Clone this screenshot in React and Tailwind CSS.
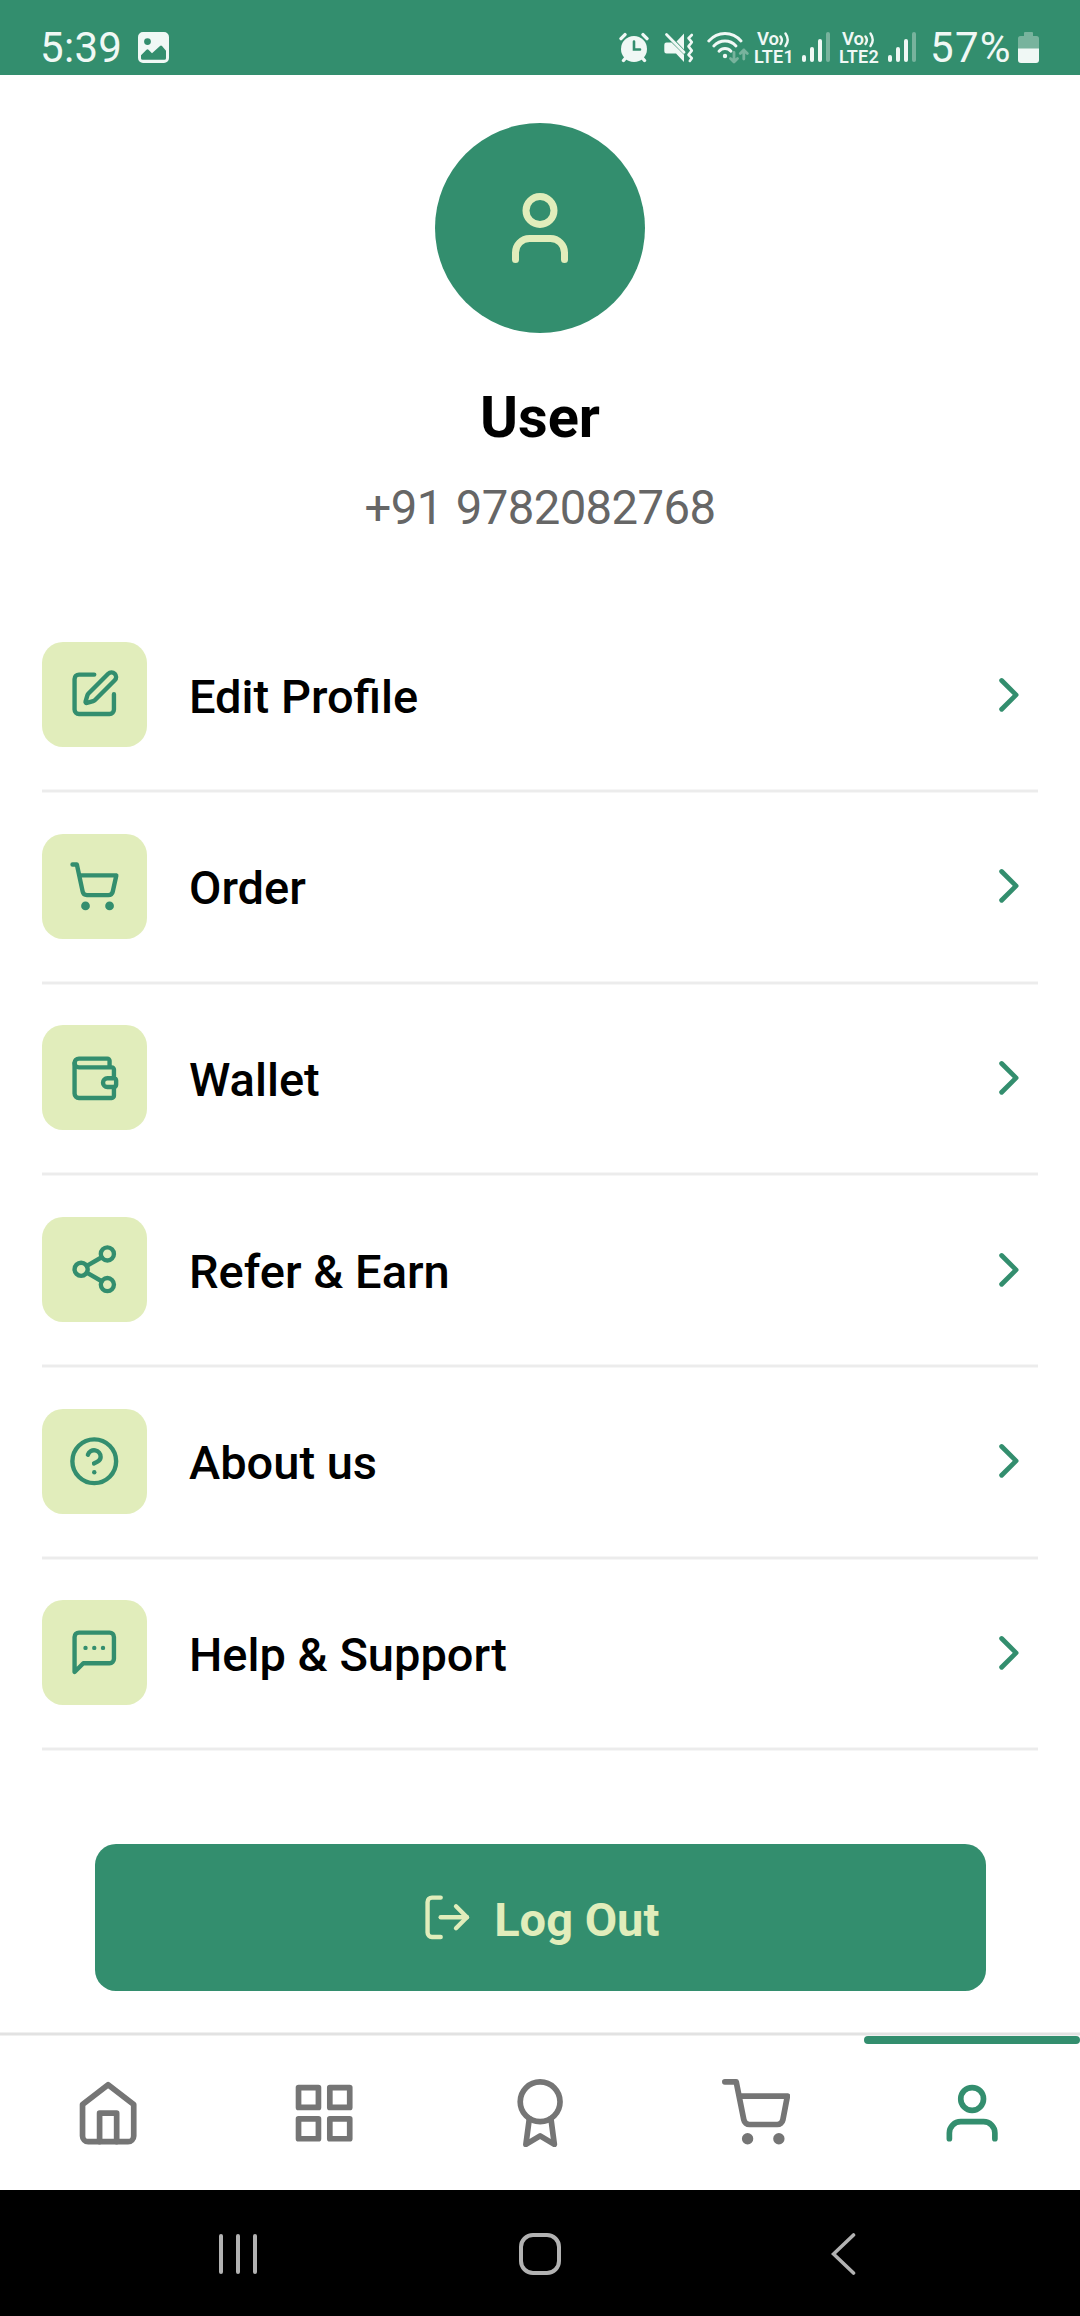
import React from "react";
import {
  User,
  SquarePen,
  ShoppingCart,
  Wallet,
  Share2,
  ChevronRight,
  LogOut,
} from "lucide-react";
import { FiHome, FiGrid, FiAward, FiShoppingCart, FiUser } from "react-icons/fi";

const stroke = {
  fill: "none",
  stroke: "currentColor",
  strokeWidth: 2,
  strokeLinecap: "round",
  strokeLinejoin: "round",
};

function HelpIcon({ size }) {
  return (
    <svg width={size} height={size} viewBox="0 0 24 24" {...stroke}>
      <circle cx="12" cy="12" r="10" />
      <path d="M9.09 9a3 3 0 0 1 5.83 1c0 2-3 3-3 3" />
      <path d="M12 17h.01" />
    </svg>
  );
}

function MessageIcon({ size }) {
  return (
    <svg width={size} height={size} viewBox="0 0 24 24" {...stroke}>
      <path d="M21 15a2 2 0 0 1-2 2H7l-4 4V5a2 2 0 0 1 2-2h14a2 2 0 0 1 2 2z" />
      <path d="M8 10h.01M12 10h.01M16 10h.01" />
    </svg>
  );
}

function PictureIcon() {
  return (
    <svg width="31" height="31" viewBox="0 0 31 31">
      <path
        fill="currentColor"
        fillRule="evenodd"
        d="M5 0h21a5 5 0 0 1 5 5v21a5 5 0 0 1-5 5H5a5 5 0 0 1-5-5V5a5 5 0 0 1 5-5zM9.5 6.2a3.4 3.4 0 1 0 0 6.8a3.4 3.4 0 0 0 0-6.8zM3 23.2v3q0 1.6 1.6 1.6h21.8q1.6 0 1.6-1.6v-7.4L24 13.9q-1-1-2 0L14 21.2l-3.500-3.400q-1-1-2 0z"
      />
    </svg>
  );
}

function AlarmIcon() {
  return (
    <svg width="30" height="31" viewBox="0 0 30 31">
      <g fill="none" stroke="currentColor" strokeLinecap="round">
        <path strokeWidth="3.400" d="M2 6.600l4-4M28 6.600l-4-4M4.500 28.500l2.500-3M25.500 28.500l-2.500-3" />
      </g>
      <circle cx="15" cy="17" r="13" fill="currentColor" />
      <path d="M15 9.500v8h6" fill="none" stroke="#338e6e" strokeWidth="2.600" strokeLinecap="round" />
    </svg>
  );
}

function MuteIcon() {
  return (
    <svg width="30" height="31" viewBox="0 0 30 31">
      <path fill="currentColor" d="M20 1.500v16L12.500 9.500z" />
      <path fill="currentColor" d="M2.500 10.500h5L20 22.800V30l-8-8.500H2.500Q.3 21.500.3 19.300v-6.600q0-2.200 2.200-2.200z" />
      <path d="M2.500 2.500L20 20.300" stroke="currentColor" strokeWidth="2.800" strokeLinecap="round" />
      <path
        d="M27.800 3l-3.300 3.200 3.300 4-3.300 4.200 3.300 4.200-3.300 4.200 3.300 3.400-2 2.800"
        fill="none"
        stroke="currentColor"
        strokeWidth="2.600"
        strokeLinecap="round"
        strokeLinejoin="round"
      />
    </svg>
  );
}

function WifiIcon() {
  return (
    <svg width="42" height="32" viewBox="0 0 42 32">
      <g fill="none" stroke="currentColor" strokeWidth="2.900" strokeLinecap="round">
        <path d="M1.800 9Q8.500 1.500 18 1.500T34 9" />
        <path d="M6.800 14Q11.500 9 18 9T29 14" />
        <path d="M12 19.200Q14.500 16.500 18 16.500T24 19.200" />
      </g>
      <circle cx="18" cy="24" r="2.200" fill="currentColor" />
      <g fill="none" stroke="#78b39d" strokeWidth="2.800" strokeLinecap="round" strokeLinejoin="round">
        <path d="M27 20.500v9M23.500 26.500l3.500 3.500 3.500-3.500" />
        <path d="M36.800 27V18M33.300 21.500l3.500-3.500 3.500 3.500" />
      </g>
    </svg>
  );
}

function VoLte({ label }) {
  return (
    <div className="flex h-[32px] w-[40px] flex-col text-[18px] font-semibold">
      <div className="flex h-[17px] pl-[3px] leading-[14px]">
        <span className="h-[14px] text-[18.500px]">Vo</span>
        <svg width="12" height="17" viewBox="0 0 12 17" className="shrink-0">
          <path
            d="M1.500 4.500Q4.300 8 1.500 12M6.500 1.500Q11 8 6.500 14"
            fill="none"
            stroke="currentColor"
            strokeWidth="2.400"
            strokeLinecap="round"
          />
        </svg>
      </div>
      <span className="h-[15px] leading-[15px] tracking-[0.2px]">{label}</span>
    </div>
  );
}

function SignalBars() {
  return (
    <div className="flex h-[30px] w-[28px] items-end justify-between">
      <span className="h-[7px] w-[4px] rounded-full bg-current" />
      <span className="h-[15px] w-[4px] rounded-full bg-current" />
      <span className="h-[23px] w-[4px] rounded-full bg-current" />
      <span className="h-[30px] w-[4px] rounded-full bg-[#78b39d]" />
    </div>
  );
}

function BatteryIcon() {
  return (
    <svg width="21" height="31" viewBox="0 0 21 31">
      <path fill="#78b39d" d="M6 1q0-1 1-1h7q1 0 1 1v3h3.500Q21 4 21 6.500V17H0V6.500Q0 4 2.500 4H6z" />
      <path fill="currentColor" d="M0 16.500h21V28q0 3-3 3H3q-3 0-3-3z" />
    </svg>
  );
}

function StatusBar() {
  return (
    <header className="flex h-[75px] shrink-0 items-start bg-[#338e6e] pt-[32px] pr-[41px] pl-[40px] text-[#f0f8f5]">
      <span className="w-[98px] text-[42px] leading-[31px] tracking-[0.3px]">5:39</span>
      <PictureIcon />
      <div className="ml-auto flex items-start">
        <AlarmIcon />
        <div className="ml-[15px]">
          <MuteIcon />
        </div>
        <div className="ml-[13px]">
          <WifiIcon />
        </div>
        <div className="ml-[5px]">
          <VoLte label="LTE1" />
        </div>
        <div className="ml-[8px]">
          <SignalBars />
        </div>
        <div className="ml-[9px]">
          <VoLte label="LTE2" />
        </div>
        <div className="ml-[9px]">
          <SignalBars />
        </div>
        <span className="ml-[14px] w-[88px] text-[42px] leading-[31px] tracking-[1.3px]">57%</span>
        <BatteryIcon />
      </div>
    </header>
  );
}

const menu = [
  { label: "Edit Profile", Icon: SquarePen },
  { label: "Order", Icon: ShoppingCart },
  { label: "Wallet", Icon: Wallet },
  { label: "Refer & Earn", Icon: Share2 },
  { label: "About us", Icon: HelpIcon },
  { label: "Help & Support", Icon: MessageIcon },
];

function MenuRow({ label, Icon }) {
  return (
    <li>
      <div className="flex h-[189px] items-center">
        <div className="flex size-[105px] items-center justify-center rounded-[21px] bg-[#e1edbb] text-[#338e6e]">
          <Icon size={52.5} />
        </div>
        <span className="ml-[42px] flex-1 pt-[4.500px] text-[47px] leading-[56px] font-medium text-black">
          {label}
        </span>
        <ChevronRight size={57.75} className="text-[#338e6e]" />
      </div>
      <div className="mb-[-1.375px] h-[4px] border-y border-[#f6f6f6] bg-[#ececec]" />
    </li>
  );
}

const tabs = [FiHome, FiGrid, FiAward, FiShoppingCart, FiUser];

function TabBar() {
  return (
    <nav className="mt-auto shrink-0">
      <div className="h-[4px] border-y border-[#f0f0f0] bg-[#e2e2e2]" />
      <div className="grid h-[154px] grid-cols-5">
        {tabs.map((Icon, i) => {
          const active = i === 4;
          return (
            <button
              key={i}
              className={
                active
                  ? "relative flex items-center justify-center pr-[0.6px] text-[#338e6e]"
                  : "relative flex items-center justify-center pr-[0.6px] text-[#757575]"
              }
            >
              {active && <span className="absolute inset-x-0 top-0 h-[8px] rounded-full bg-[#338e6e]" />}
              <Icon size={68.25} />
            </button>
          );
        })}
      </div>
    </nav>
  );
}

function SystemNav() {
  return (
    <footer className="flex h-[126px] shrink-0 items-center justify-between bg-black pt-[2px] pr-[224px] pl-[219px] text-[#b2b2b2]">
      <div className="flex h-[40px] w-[38px] justify-between">
        <span className="w-[4px] rounded-full bg-current" />
        <span className="w-[4px] rounded-full bg-current" />
        <span className="w-[4px] rounded-full bg-current" />
      </div>
      <div className="ml-[-8px] size-[42px] rounded-[14px] border-[4px] border-current" />
      <svg width="25" height="42" viewBox="0 0 25 42">
        <path d="M22.500 2L2.500 21l20 19" fill="none" stroke="currentColor" strokeWidth="3.600" strokeLinecap="round" />
      </svg>
    </footer>
  );
}

export default function App() {
  return (
    <div className="flex h-[2316px] w-[1080px] flex-col overflow-hidden bg-white font-['Roboto',sans-serif]">
      <StatusBar />
      <main className="flex flex-col">
        <section className="flex h-[525px] flex-col items-center pt-[48px]">
          <div className="flex size-[210px] items-center justify-center rounded-full bg-[#338e6e] text-[#e1edbb]">
            <User size={84} />
          </div>
          <h1 className="mt-[50px] text-[57.750px] leading-[68px] font-bold text-black">User</h1>
          <p className="mt-[29px] text-[47.250px] leading-[56px] tracking-[-0.6px] text-[#666666] [word-spacing:2px]">
            +91 9782082768
          </p>
        </section>
        <ul className="px-[42px]">
          {menu.map((item) => (
            <MenuRow key={item.label} {...item} />
          ))}
        </ul>
        <button className="mx-[94.500px] mt-[94px] flex h-[147px] items-center justify-center gap-[21px] rounded-[21px] bg-[#338e6e] text-[#e1edbb]">
          <LogOut size={52.5} />
          <span className="pt-[5px] text-[47px] leading-[56px] font-bold">Log Out</span>
        </button>
      </main>
      <TabBar />
      <SystemNav />
    </div>
  );
}
